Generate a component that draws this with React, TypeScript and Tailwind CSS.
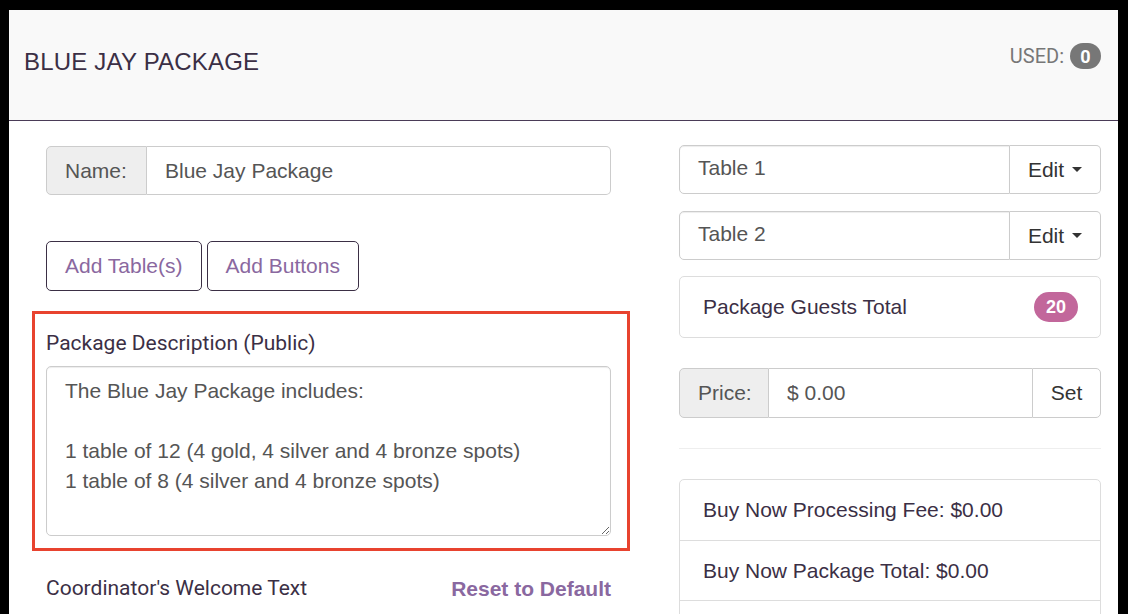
import React from "react";

const sans = "font-['Liberation_Sans',Arial,sans-serif]";
const roboto = "font-['Roboto','Liberation_Sans',sans-serif]";

function Caret() {
  return <span className="ml-2 inline-block w-0 h-0 border-x-[5px] border-x-transparent border-t-[5px] border-t-[#333] align-middle" />;
}

function TableRow({ name }: { name: string }) {
  return (
    <div className="flex h-[49px]">
      <div className="flex-1 flex items-center pb-[3px] px-[18px] border border-[#ccc] rounded-l-[5px] text-[21px] text-[#555] shadow-[inset_0_1px_1px_rgba(0,0,0,0.075)]">
        {name}
      </div>
      <button className="w-[91px] flex items-center justify-center border border-l-0 border-[#ccc] rounded-r-[5px] bg-white text-[21px] text-[#333]">
        Edit
        <Caret />
      </button>
    </div>
  );
}

export default function App() {
  return (
    <div className={`bg-black pt-[10px] pl-[9px] pr-[10px] h-[614px] overflow-hidden ${sans}`}>
      <div className="bg-white h-[604px] overflow-hidden">
        {/* Panel heading */}
        <div className="h-[111px] bg-[#f9f9f9] border-b border-[#4a3b57] flex items-start justify-between pl-[15px] pr-[17px]">
          <h1 className="mt-[36px] text-[24px] leading-[32px] text-[#3b2f45] tracking-[0.2px]">BLUE JAY PACKAGE</h1>
          <div className={`mt-[31px] flex items-center gap-[6px] ${roboto} text-[20px] text-[#777]`}>
            USED:
            <span className="h-[26px] min-w-[31px] px-2 rounded-full bg-[#777] text-white text-[18px] font-bold flex items-center justify-center">0</span>
          </div>
        </div>

        <div className="flex pt-[24px] pl-[37px] pr-[17px]">
          {/* Left column */}
          <div className="w-[565px]">
            <div className="flex h-[49px] mt-[1px]">
              <div className="w-[101px] flex items-center px-[18px] bg-[#eee] border border-[#ccc] rounded-l-[5px] text-[21px] text-[#555]">Name:</div>
              <div className="flex-1 flex items-center px-[18px] border border-l-0 border-[#ccc] rounded-r-[5px] text-[21px] text-[#555]">Blue Jay Package</div>
            </div>

            <div className="flex gap-[5px] mt-[46px]">
              <button className="h-[50px] px-[18px] border border-[#3b2f45] rounded-[5px] text-[21px] text-[#8a68a0] bg-white">Add Table(s)</button>
              <button className="h-[50px] px-[18px] border border-[#3b2f45] rounded-[5px] text-[21px] text-[#8a68a0] bg-white">Add Buttons</button>
            </div>

            {/* Highlighted description block */}
            <div className="mt-[20px] ml-[-14px] mr-[-19px] border-[3px] border-[#e8432f] pl-[11px] pr-[16px] pt-[16px] pb-[12px]">
              <label className={`block ${roboto} text-[21px] leading-[26px] text-[#3b2f45]`}>Package Description (Public)</label>
              <textarea
                className="mt-[10px] block w-full h-[170px] border border-[#ccc] rounded-[5px] px-[18px] py-[9px] text-[21px] leading-[30px] text-[#555] resize-y shadow-[inset_0_1px_1px_rgba(0,0,0,0.075)] outline-none"
                defaultValue={"The Blue Jay Package includes:\n\n1 table of 12 (4 gold, 4 silver and 4 bronze spots)\n1 table of 8 (4 silver and 4 bronze spots)"}
              />
            </div>

            <div className="mt-[22px] flex items-center justify-between">
              <span className={`${roboto} text-[21px] text-[#3b2f45]`}>Coordinator's Welcome Text</span>
              <a className="text-[21px] font-bold text-[#8a68a0]">Reset to Default</a>
            </div>
          </div>

          {/* Right column */}
          <div className="ml-[68px] flex-1 flex flex-col">
            <TableRow name="Table 1" />
            <div className="h-[17px]" />
            <TableRow name="Table 2" />

            <div className="mt-[16px] h-[62px] border border-[#ddd] rounded-[5px] flex items-center justify-between pl-[23px] pr-[22px]">
              <span className="text-[21px] text-[#3b2f45]">Package Guests Total</span>
              <span className="h-[30px] w-[44px] rounded-full bg-[#c2679b] text-white text-[18px] font-bold flex items-center justify-center">20</span>
            </div>

            <div className="mt-[30px] flex h-[50px]">
              <div className="w-[90px] flex items-center px-[18px] bg-[#eee] border border-[#ccc] rounded-l-[5px] text-[21px] text-[#555]">Price:</div>
              <div className="flex-1 flex items-center px-[18px] border-y border-[#ccc] text-[21px] text-[#555]">$ 0.00</div>
              <button className="w-[69px] flex items-center justify-center border border-[#ccc] rounded-r-[5px] bg-white text-[21px] text-[#333]">Set</button>
            </div>

            <hr className="mt-[30px] border-t border-[#eee]" />

            <div className="mt-[30px] border border-[#ddd] rounded-t-[5px]">
              <div className="h-[61px] flex items-center px-[23px] border-b border-[#ddd] text-[21px] text-[#3b2f45]">Buy Now Processing Fee: $0.00</div>
              <div className="h-[60px] flex items-center px-[23px] border-b border-[#ddd] text-[21px] text-[#3b2f45]">Buy Now Package Total: $0.00</div>
              <div className="h-[60px]" />
            </div>
          </div>
        </div>
      </div>
    </div>
  );
}
